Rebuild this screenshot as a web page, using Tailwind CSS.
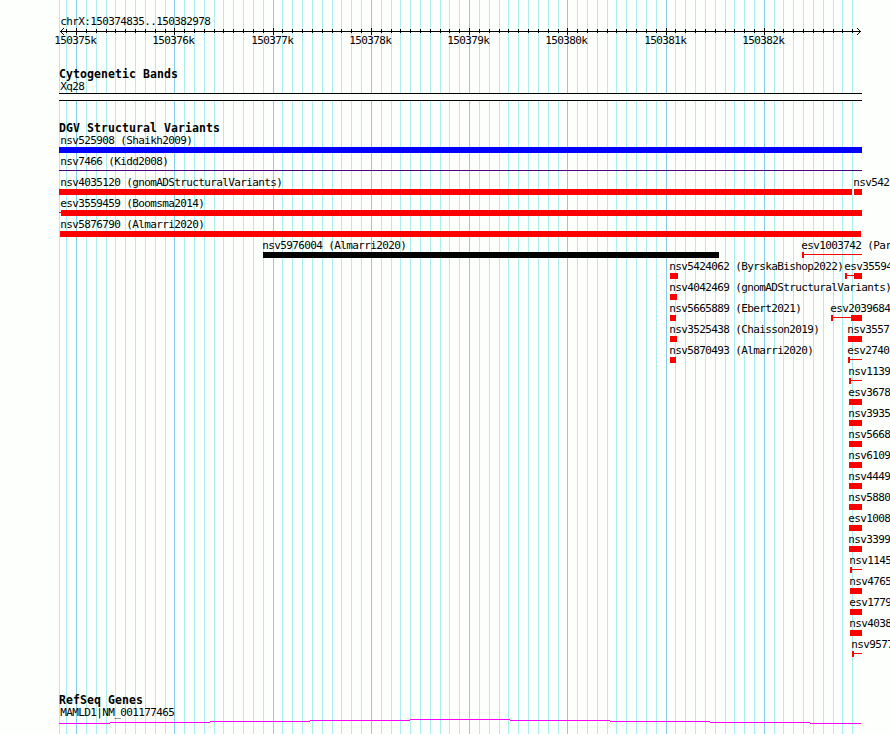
<!DOCTYPE html>
<html lang="en">
<head>
<meta charset="utf-8">
<title>chrX:150374835..150382978</title>
<script src="https://cdn.jsdelivr.net/npm/@tailwindcss/browser@4"></script>
</head>
<body class="bg-[#fdfffc] overflow-hidden">
<main class="relative w-[890px] h-[734px] overflow-hidden bg-[#fdfffc] text-black font-['DejaVu_Sans_Mono','Liberation_Mono',monospace] text-[11px] leading-[13px] tracking-[-0.622px] whitespace-nowrap">
  <svg id="grid" class="absolute inset-0" width="890" height="734" shape-rendering="crispEdges"></svg>
  <div class="relative flex flex-col h-full pt-[15px]">
    <header class="h-[53px] shrink-0">
      <div class="pl-[60.2px] h-[13px]">chrX:150374835..150382978</div>
      <svg id="ruler" class="block h-[7px]" width="890" height="7" viewBox="0 28 890 7" shape-rendering="crispEdges"></svg>
      <div id="ticks" class="relative -mt-px h-[13px]"></div>
    </header>
    <section class="h-[54px] shrink-0 pl-[59px]">
      <h2 class="font-bold text-[11.5px] tracking-[0.077px]">Cytogenetic Bands</h2>
      <div class="pl-[1.2px] -mt-px">Xq28</div>
      <div class="w-[803px] h-[8px] border-y border-black bg-[#fdfffc]"></div>
    </section>
    <section class="h-[572px] shrink-0">
      <h2 class="font-bold text-[11.5px] tracking-[0.077px] pl-[59px]">DGV Structural Variants</h2>
      <div id="rows"></div>
    </section>
    <section class="pl-[59px]">
      <h2 class="font-bold text-[11.5px] tracking-[0.077px]">RefSeq Genes</h2>
      <div class="pl-[1.2px] -mt-px">MAMLD1|NM_001177465</div>
      <svg class="block" width="803" height="6" viewBox="59 719 803 6" shape-rendering="crispEdges" fill="#ff00ff">
        <rect x="59" y="723" width="51" height="1"/><rect x="110" y="722" width="100" height="1"/>
        <rect x="210" y="721" width="100" height="1"/><rect x="310" y="720" width="100" height="1"/>
        <rect x="410" y="719" width="100" height="1"/><rect x="510" y="720" width="100" height="1"/>
        <rect x="610" y="721" width="100" height="1"/><rect x="710" y="722" width="100" height="1"/>
        <rect x="810" y="723" width="51" height="1"/>
      </svg>
    </section>
  </div>
</main>
<script>
const rect = (x, y, w, h, c) => `<rect x="${x}" y="${y}" width="${w}" height="${h}" fill="${c}"/>`;
let grid = rect(59, 0, 1, 734, '#afeeee'), ruler = rect(60, 31, 801, 1, '#000'), ticks = '';
for (let k = -1; k <= 79; k++) {
  const x = Math.floor(76.62 + k * 9.8245), major = k % 10 === 0;
  grid += rect(x, 0, 1, 734, major ? '#87ceeb' : '#afeeee');
  ruler += major ? rect(x, 28, 1, 7, '#000') : rect(x, 29, 1, 4, '#000');
  if (major) ticks += `<span class="absolute top-0" style="left:${x - 21.8}px">${150375 + k / 10}k</span>`;
}
for (let i = 1; i <= 3; i++) {
  ruler += rect(60 + i, 31 - i, 1, 1, '#000') + rect(60 + i, 31 + i, 1, 1, '#000');
  ruler += rect(860 - i, 31 - i, 1, 1, '#000') + rect(860 - i, 31 + i, 1, 1, '#000');
}
document.getElementById('grid').innerHTML = grid;
document.getElementById('ruler').innerHTML = ruler;
document.getElementById('ticks').innerHTML = ticks;

// Feature: [label, label x, [[start, end, kind], ...]]; kind is a bar or a thin line
const R = 'bg-[#ff0000]', bar = 'top-[12px] h-[6px]', line = 'top-[14px] h-px';
const B = (a, b, c = R) => [a, b, bar + ' ' + c];
const L = (a, b, c = R) => [a, b, line + ' ' + c];
const open = a => [B(a, a + 2), L(a, 862)];
const rows = [
  [['nsv525908 (Shaikh2009)', 60, [B(59, 862, 'bg-[#0000ff]')]]],
  [['nsv7466 (Kidd2008)', 60, [L(59, 862, 'bg-[#4b0082]')]]],
  [['nsv4035120 (gnomADStructuralVariants)', 60, [B(59, 852)]], ['nsv542', 853, [B(854, 862)]]],
  [['esv3559459 (Boomsma2014)', 60, [L(59, 61), B(61, 862)]]],
  [['nsv5876790 (Almarri2020)', 60, [B(60, 861)]]],
  [['nsv5976004 (Almarri2020)', 262, [B(263, 719, 'bg-black')]], ['esv1003742 (Par', 801, open(802)]],
  [['nsv5424062 (ByrskaBishop2022)', 669, [B(670, 678)]], ['esv35594', 844, [B(845, 847), L(845, 854), B(854, 862)]]],
  [['nsv4042469 (gnomADStructuralVariants)', 669, [B(670, 677)]]],
  [['nsv5665889 (Ebert2021)', 669, [B(670, 676)]], ['esv2039684', 830, [B(831, 833), L(831, 851), B(851, 862)]]],
  [['nsv3525438 (Chaisson2019)', 669, [B(670, 677)]], ['nsv3557', 847, [B(848, 862)]]],
  [['nsv5870493 (Almarri2020)', 669, [B(670, 676)]], ['esv2740', 847, open(848)]],
  [['nsv1139', 848, open(849)]],
  ...['esv3678', 'nsv3935', 'nsv5668', 'nsv6109', 'nsv4449', 'nsv5880', 'esv1008', 'nsv3399'].map(n => [[n, 848, [B(849, 862)]]]),
  [['nsv1145', 849, open(850)]],
  ...['nsv4765', 'esv1779', 'nsv4038'].map(n => [[n, 849, [B(850, 862)]]]),
  [['nsv9577', 851, open(852)]],
];
document.getElementById('rows').innerHTML = rows.map(r => '<div class="relative h-[21px]">' + r.map(([t, x, s]) =>
  s.map(([a, b, c]) => `<div class="absolute ${c}" style="left:${a}px;width:${b - a}px"></div>`).join('') +
  `<span class="absolute -top-px" style="left:${x + 0.2}px">${t}</span>`).join('') + '</div>').join('');
</script>
</body>
</html>
